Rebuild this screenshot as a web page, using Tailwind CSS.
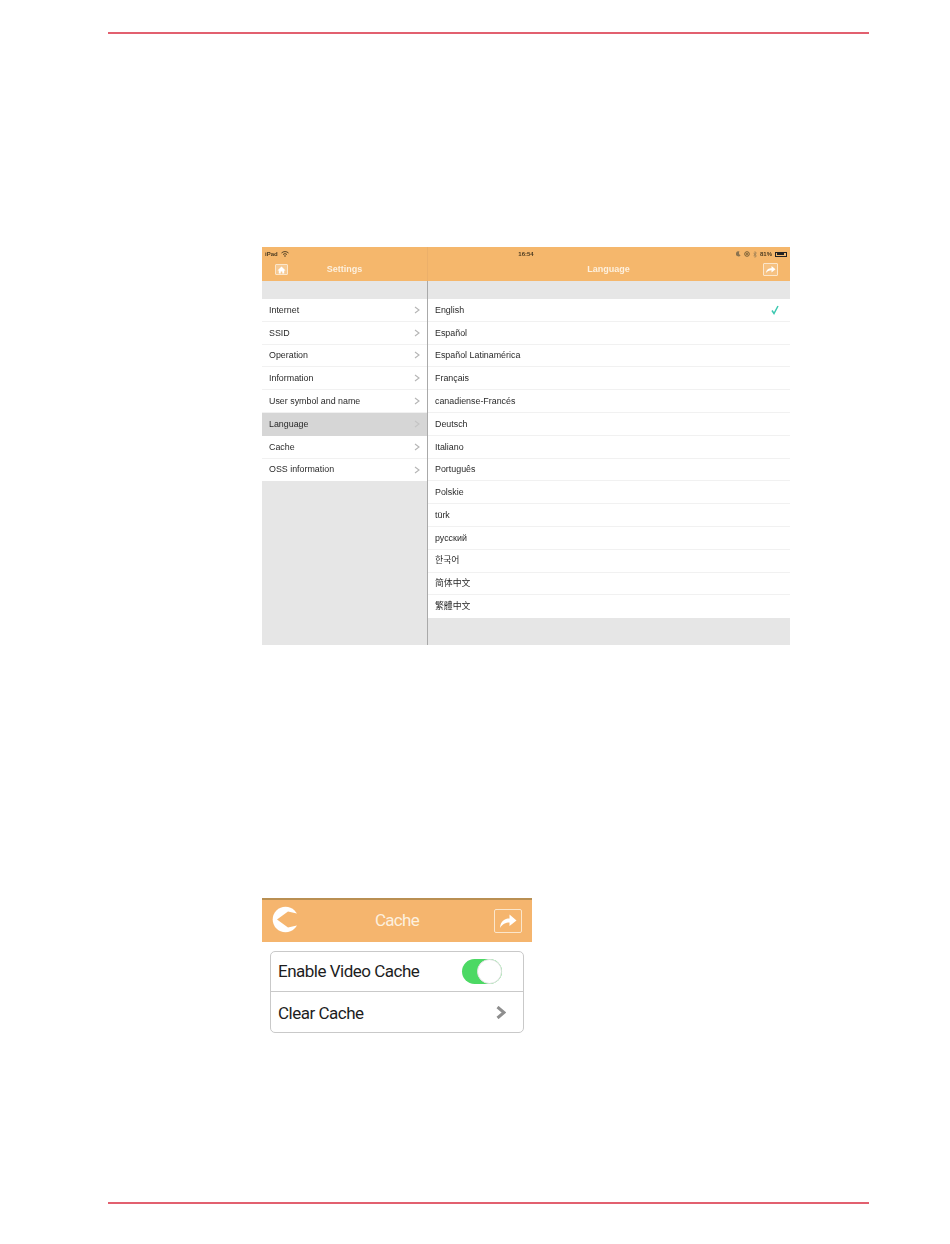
<!DOCTYPE html>
<html lang="en">
<head>
<meta charset="utf-8">
<title>Settings</title>
<script src="https://cdn.jsdelivr.net/npm/@tailwindcss/browser@4"></script>
</head>
<body class="bg-white font-['Liberation_Sans','Noto_Sans_CJK_KR',sans-serif]">
<div class="h-[1244px] w-[950px] flex flex-col">
  <div class="ml-[108px] mt-[32px] w-[761px] h-[2px] shrink-0 bg-[#e2606f]"></div>

  <!-- ipad screen -->
  <div class="ml-[262px] mt-[213px] w-[528px] h-[398px] shrink-0 flex flex-col text-[8.9px] text-[#2a2a2a] blur-[0.3px]">
    <div class="h-[34px] shrink-0 bg-[#f5b76c] flex flex-col text-white relative">
      <div class="absolute left-[165px] top-0 bottom-0 w-px bg-[#ecb06a]"></div>
      <div class="h-[14px] flex items-center justify-between pl-[3px] pr-[3px] text-[6px] leading-none text-[#4a3a20]">
        <div class="flex-1 flex items-center gap-[3px]">
          <span class="font-bold">iPad</span>
          <svg width="8" height="6" viewBox="0 0 8 6"><path d="M0.5 2 A5 5 0 0 1 7.5 2 M2 3.5 A3 3 0 0 1 6 3.5" stroke="#4a3a20" stroke-width="0.9" fill="none"/><circle cx="4" cy="5" r="0.8" fill="#4a3a20"/></svg>
        </div>
        <span class="font-bold">16:54</span>
        <div class="flex-1 flex items-center justify-end gap-[3px]">
          <svg width="5" height="6" viewBox="0 0 5 6"><path d="M3.5 0.5 A2.6 2.6 0 1 0 4.6 4.3 A2.4 2.4 0 0 1 3.5 0.5Z" fill="#8a7350"/></svg>
          <svg width="6" height="6" viewBox="0 0 6 6"><circle cx="3" cy="3" r="2.3" stroke="#6a5530" stroke-width="0.9" fill="none"/><circle cx="3" cy="3" r="0.9" fill="#6a5530"/></svg>
          <svg width="4" height="7" viewBox="0 0 4 7"><path d="M0.5 1.8 L3.4 5 L2 6.4 V0.6 L3.4 2 L0.5 5.2" stroke="#8a7350" stroke-width="0.6" fill="none"/></svg>
          <span class="font-bold">81%</span>
          <div class="w-[12px] h-[5px] border-[0.5px] border-[#222] p-[0.5px] flex"><div class="w-[80%] bg-[#222]"></div></div>
        </div>
      </div>
      <div class="flex-1 flex text-[9px] font-bold">
        <div class="w-[165px] relative flex items-center justify-center pb-[2px]">
          <span class="text-[#fdf0de]">Settings</span>
          <div class="absolute left-[13px] top-[3px] w-[13px] h-[11px] border border-[#fbe6cb] rounded-[1px] bg-white/25 flex items-center justify-center">
            <svg width="9" height="8" viewBox="0 0 9 8"><path d="M4.5 0.5 L8.5 4.5 H7.2 V7.5 H5.3 V5.5 H3.7 V7.5 H1.8 V4.5 H0.5 Z" fill="#fff"/></svg>
          </div>
        </div>
        <div class="flex-1 relative flex items-center justify-center pb-[2px]">
          <span class="text-[#fdf0de]">Language</span>
          <div class="absolute right-[12px] top-[2px] w-[15px] h-[13px] border border-[#fbe6cb] rounded-[1px] bg-white/15 flex items-center justify-center">
            <svg width="11" height="9" viewBox="0 0 11 9"><path d="M1 8 C1.5 4.5 3.5 3.2 6.5 3.2 V1 L10.5 4.2 L6.5 7.4 V5.2 C4 5.2 2.5 6 1 8Z" fill="#fff"/></svg>
          </div>
        </div>
      </div>
    </div>

    <div class="flex-1 flex min-h-0">
      <!-- left list -->
      <div class="w-[165px] shrink-0 bg-[#e6e6e6] flex flex-col">
        <div class="h-[18px] shrink-0"></div>
        <div class="h-[22.8px] bg-white border-b border-[#f1f1f1] flex items-center justify-between pl-[7px] pr-[7px]"><span class="pt-px">Internet</span><svg width="6" height="8" viewBox="0 0 6 8"><path d="M1 1 L5 4 L1 7" stroke="#b5b5b5" stroke-width="1.1" fill="none"/></svg></div>
        <div class="h-[22.8px] bg-white border-b border-[#f1f1f1] flex items-center justify-between pl-[7px] pr-[7px]"><span class="pt-px">SSID</span><svg width="6" height="8" viewBox="0 0 6 8"><path d="M1 1 L5 4 L1 7" stroke="#b5b5b5" stroke-width="1.1" fill="none"/></svg></div>
        <div class="h-[22.8px] bg-white border-b border-[#f1f1f1] flex items-center justify-between pl-[7px] pr-[7px]"><span class="pt-px">Operation</span><svg width="6" height="8" viewBox="0 0 6 8"><path d="M1 1 L5 4 L1 7" stroke="#b5b5b5" stroke-width="1.1" fill="none"/></svg></div>
        <div class="h-[22.8px] bg-white border-b border-[#f1f1f1] flex items-center justify-between pl-[7px] pr-[7px]"><span class="pt-px">Information</span><svg width="6" height="8" viewBox="0 0 6 8"><path d="M1 1 L5 4 L1 7" stroke="#b5b5b5" stroke-width="1.1" fill="none"/></svg></div>
        <div class="h-[22.8px] bg-white border-b border-[#f1f1f1] flex items-center justify-between pl-[7px] pr-[7px]"><span class="pt-px">User symbol and name</span><svg width="6" height="8" viewBox="0 0 6 8"><path d="M1 1 L5 4 L1 7" stroke="#b5b5b5" stroke-width="1.1" fill="none"/></svg></div>
        <div class="h-[22.8px] bg-[#d6d6d6] flex items-center justify-between pl-[7px] pr-[7px]"><span class="pt-px">Language</span><svg width="6" height="8" viewBox="0 0 6 8"><path d="M1 1 L5 4 L1 7" stroke="#c4c4c4" stroke-width="1.1" fill="none"/></svg></div>
        <div class="h-[22.8px] bg-white border-b border-[#f1f1f1] flex items-center justify-between pl-[7px] pr-[7px]"><span class="pt-px">Cache</span><svg width="6" height="8" viewBox="0 0 6 8"><path d="M1 1 L5 4 L1 7" stroke="#b5b5b5" stroke-width="1.1" fill="none"/></svg></div>
        <div class="h-[22.8px] bg-white flex items-center justify-between pl-[7px] pr-[7px]"><span>OSS information</span><svg width="6" height="8" viewBox="0 0 6 8"><path d="M1 1 L5 4 L1 7" stroke="#b5b5b5" stroke-width="1.1" fill="none"/></svg></div>
      </div>
      <div class="w-px shrink-0 bg-[#a9a9a9]"></div>
      <!-- right list -->
      <div class="flex-1 bg-[#e6e6e6] flex flex-col">
        <div class="h-[18px] shrink-0"></div>
        <div class="h-[22.8px] bg-white border-b border-[#f1f1f1] flex items-center justify-between pl-[7px] pr-[11px]"><span class="pt-px">English</span><svg width="8" height="10" viewBox="0 0 8 10"><path d="M1 5.5 L3 8.5 L7 1" stroke="#3cc8b0" stroke-width="1.5" fill="none"/></svg></div>
        <div class="h-[22.8px] bg-white border-b border-[#f1f1f1] flex items-center pl-[7px] pt-px">Español</div>
        <div class="h-[22.8px] bg-white border-b border-[#f1f1f1] flex items-center pl-[7px] pt-px">Español Latinamérica</div>
        <div class="h-[22.8px] bg-white border-b border-[#f1f1f1] flex items-center pl-[7px] pt-px">Français</div>
        <div class="h-[22.8px] bg-white border-b border-[#f1f1f1] flex items-center pl-[7px] pt-px">canadiense-Francés</div>
        <div class="h-[22.8px] bg-white border-b border-[#f1f1f1] flex items-center pl-[7px] pt-px">Deutsch</div>
        <div class="h-[22.8px] bg-white border-b border-[#f1f1f1] flex items-center pl-[7px] pt-px">Italiano</div>
        <div class="h-[22.8px] bg-white border-b border-[#f1f1f1] flex items-center pl-[7px]">Português</div>
        <div class="h-[22.8px] bg-white border-b border-[#f1f1f1] flex items-center pl-[7px] pt-px">Polskie</div>
        <div class="h-[22.8px] bg-white border-b border-[#f1f1f1] flex items-center pl-[7px] pt-px">türk</div>
        <div class="h-[22.8px] bg-white border-b border-[#f1f1f1] flex items-center pl-[7px] pt-px">русский</div>
        <div class="h-[22.8px] bg-white border-b border-[#f1f1f1] flex items-center pl-[7px] pt-px">한국어</div>
        <div class="h-[22.8px] bg-white border-b border-[#f1f1f1] flex items-center pl-[7px] font-['Liberation_Sans','Noto_Sans_CJK_SC',sans-serif]">简体中文</div>
        <div class="h-[22.8px] bg-white flex items-center pl-[7px] font-['Liberation_Sans','Noto_Sans_CJK_TC',sans-serif]">繁體中文</div>
      </div>
    </div>
  </div>

  <!-- phone cache screen -->
  <div class="ml-[262px] mt-[253px] w-[270px] shrink-0 font-['Roboto',sans-serif]">
    <div class="h-[44px] bg-[#f5b56e] border-t-[2px] border-[#b98f52] relative flex items-center justify-center">
      <span class="text-[17px] tracking-[-0.7px] text-[#fdf0de]">Cache</span>
      <svg class="absolute left-[10px] top-[6px]" width="27" height="27" viewBox="0 0 27 27"><circle cx="13.5" cy="13.5" r="12.8" fill="#fff"/><path d="M5 13.5 L16 5.5 L27 8 V19 L16 21.5 Z" fill="#f5b56e"/></svg>
      <div class="absolute right-[10px] top-[9px] w-[28px] h-[24px] border border-[#fbe6cb] rounded-[2px] flex items-center justify-center">
        <svg width="20" height="16" viewBox="0 0 20 16"><path d="M2 15 C2.5 8 6.5 5.5 11.5 5.5 V1.5 L18.5 7.5 L11.5 13 V9.5 C7.5 9.5 4.5 11 2 15Z" fill="#fff"/></svg>
      </div>
    </div>
    <div class="ml-[8px] mt-[9px] w-[254px] h-[82px] border border-[#c9c9c9] rounded-[5px] flex flex-col text-[17px] tracking-[-0.5px] text-[#1d1d1d]">
      <div class="h-[40px] border-b border-[#c9c9c9] flex items-center justify-between pl-[7px] pr-[21px]">
        <span>Enable Video Cache</span>
        <div class="w-[40px] h-[25px] rounded-full bg-[#4cd964] flex justify-end">
          <div class="w-[25px] h-[25px] rounded-full bg-white border border-[#e2e2e2]"></div>
        </div>
      </div>
      <div class="flex-1 flex items-center justify-between pl-[7px] pr-[17px]">
        <span class="pt-[3px]">Clear Cache</span>
        <svg width="10" height="13" viewBox="0 0 10 13"><path d="M1.5 1 L8 6.5 L1.5 12" stroke="#8e8e8e" stroke-width="3" fill="none"/></svg>
      </div>
    </div>
  </div>

  <div class="ml-[108px] mt-auto mb-[40px] w-[761px] h-[2px] shrink-0 bg-[#e2606f]"></div>
</div>
</body>
</html>
